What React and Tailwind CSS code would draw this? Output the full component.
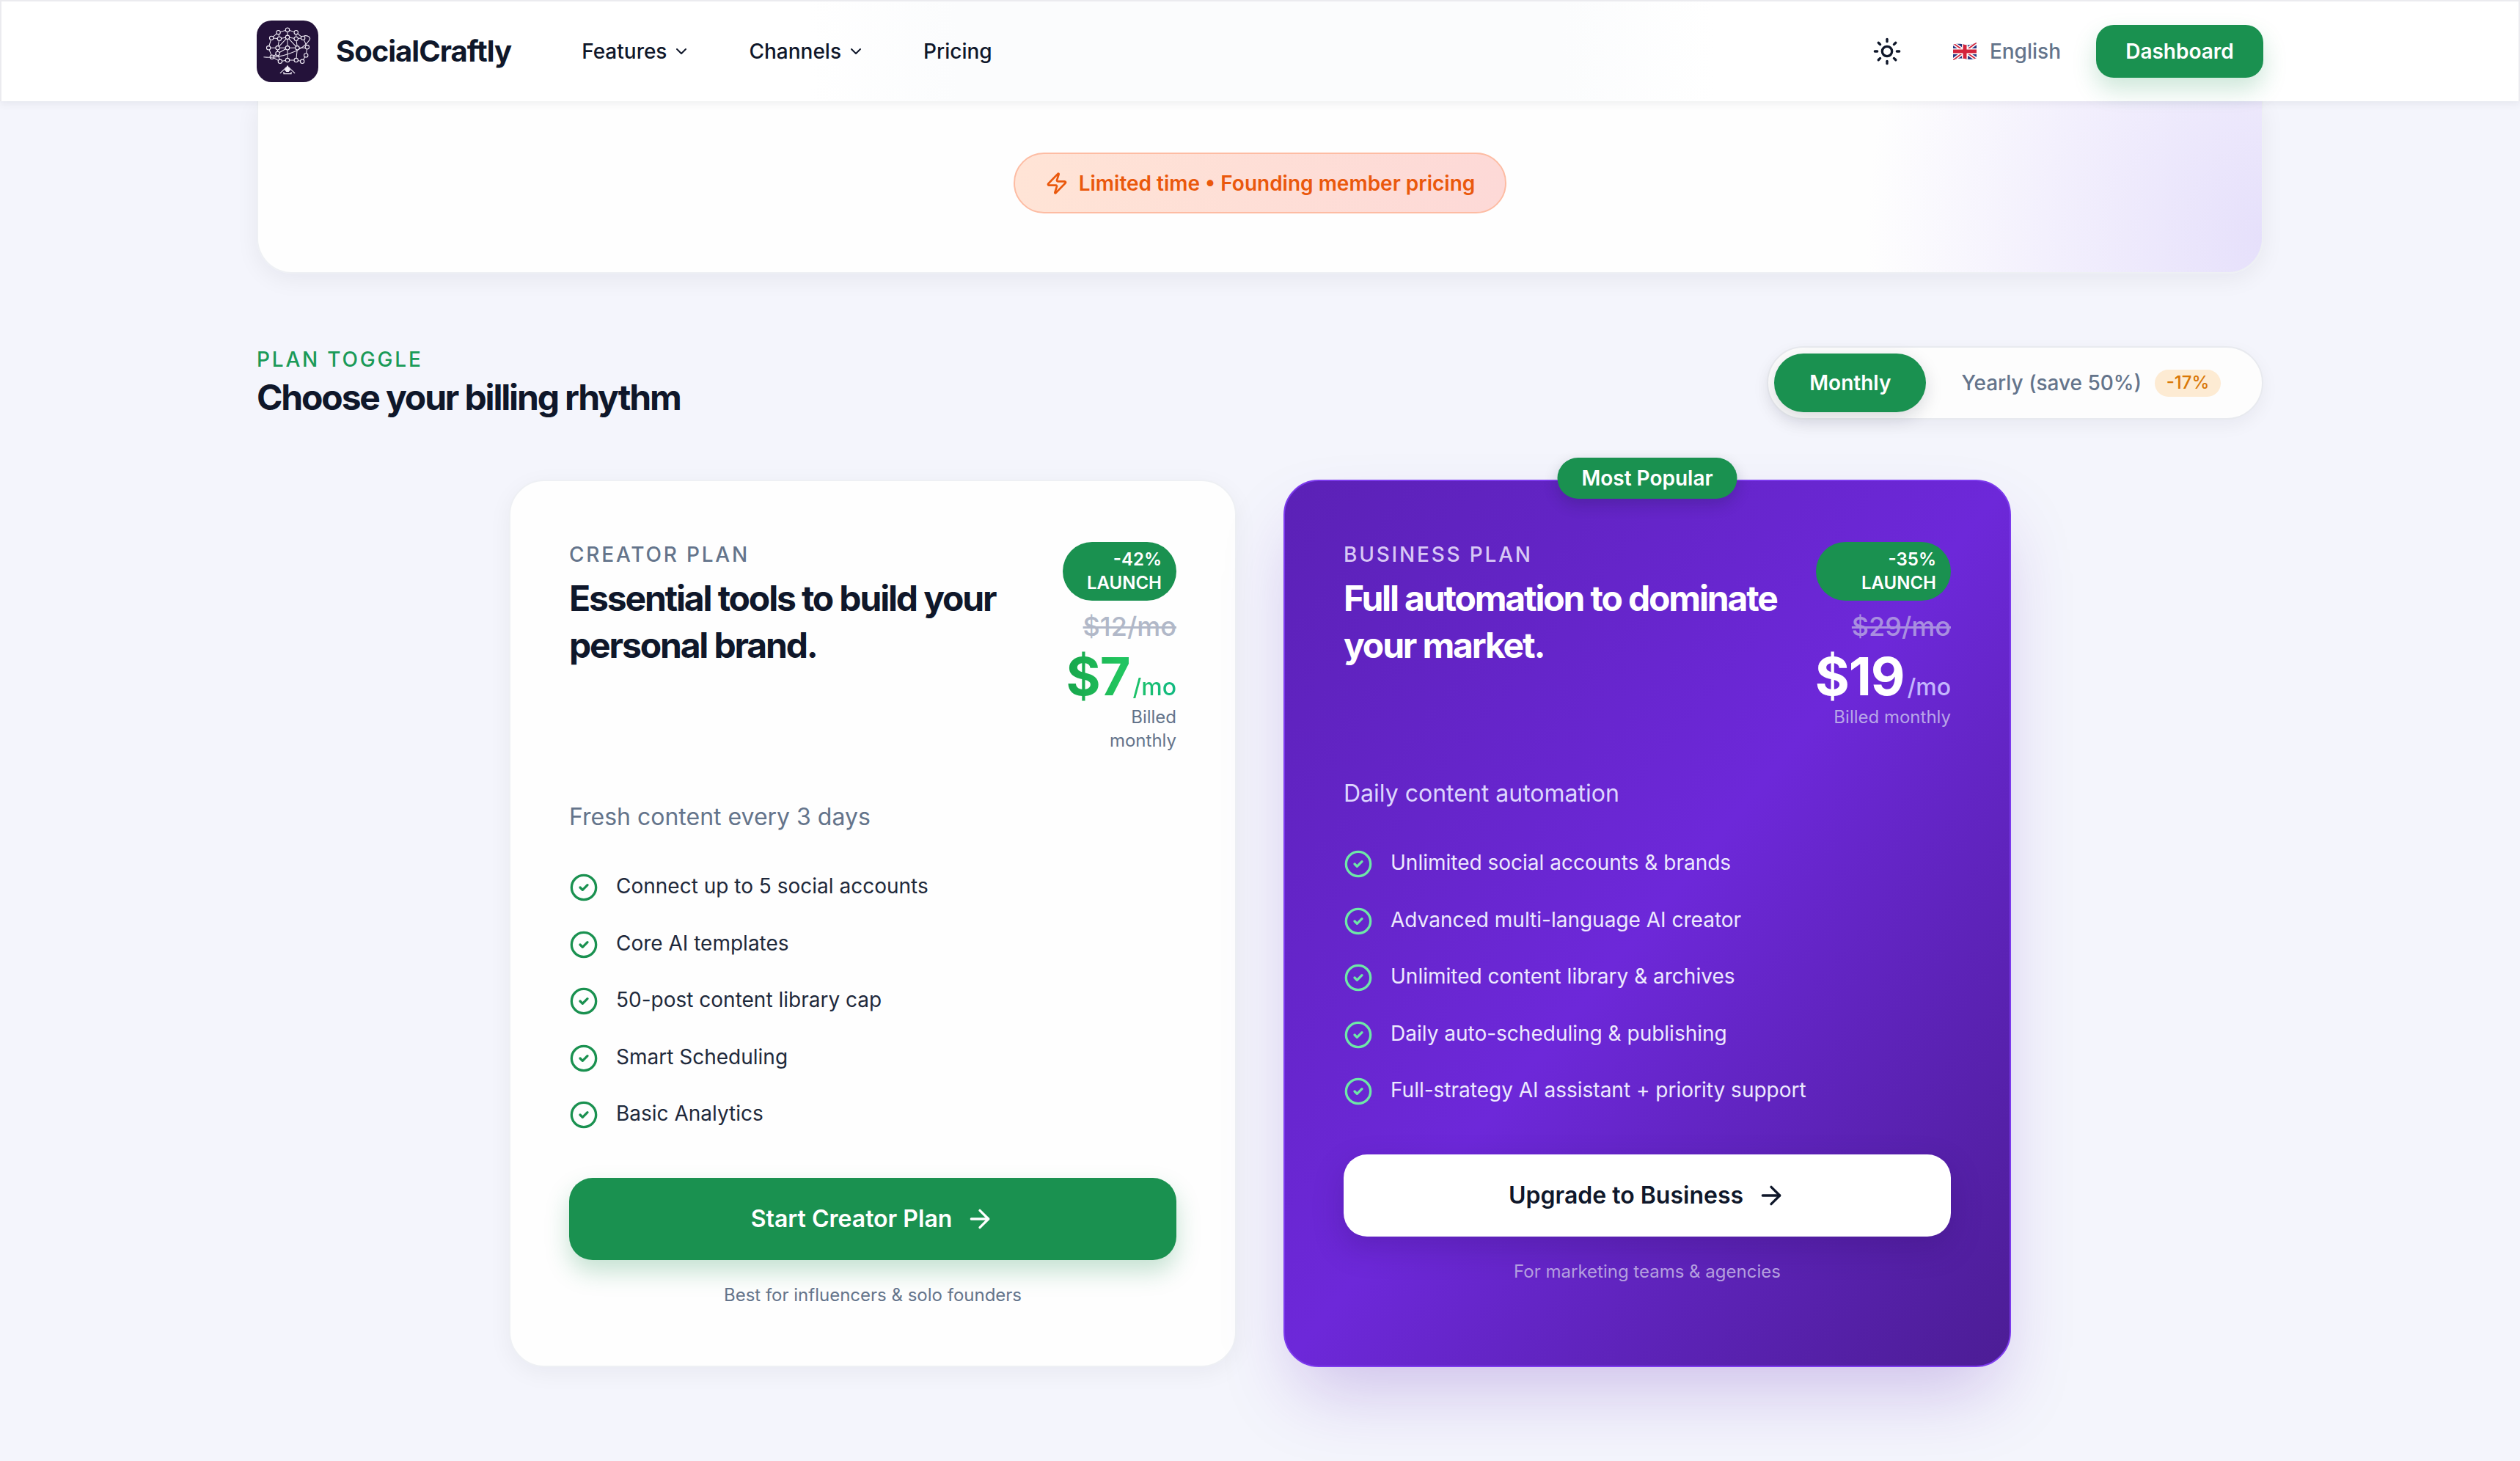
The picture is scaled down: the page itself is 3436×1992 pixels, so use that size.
import React from 'react';
import { ArrowRight, ChevronDown, CircleCheck, Sun, Zap } from 'lucide-react';

const plans = [
  {
    name: 'Creator Plan',
    title: 'Essential tools to build your personal brand.',
    discount: '-42%',
    oldPrice: '$12/mo',
    price: '$7',
    subtitle: 'Fresh content every 3 days',
    features: [
      'Connect up to 5 social accounts',
      'Core AI templates',
      '50-post content library cap',
      'Smart Scheduling',
      'Basic Analytics',
    ],
    cta: 'Start Creator Plan',
    note: 'Best for influencers & solo founders',
  },
  {
    name: 'Business Plan',
    title: 'Full automation to dominate your market.',
    discount: '-35%',
    oldPrice: '$29/mo',
    price: '$19',
    subtitle: 'Daily content automation',
    features: [
      'Unlimited social accounts & brands',
      'Advanced multi-language AI creator',
      'Unlimited content library & archives',
      'Daily auto-scheduling & publishing',
      'Full-strategy AI assistant + priority support',
    ],
    cta: 'Upgrade to Business',
    note: 'For marketing teams & agencies',
    featured: true,
  },
];

const logoNodes = [
  [155, 62], [118, 72], [190, 72], [90, 95], [155, 92], [122, 98], [190, 98], [218, 95],
  [78, 135], [115, 135], [155, 135], [195, 135], [235, 132], [92, 172], [115, 158],
  [230, 165], [125, 190], [155, 185], [190, 185], [215, 190],
];

const logoLines = [
  'M155 62L118 72L90 95L78 135L92 172L125 190L155 185L190 185L215 190L230 165L235 132L218 95L190 72L155 62',
  'M155 62V185M118 72L122 98L115 135L115 158L125 190M190 72L190 98L195 135L190 185',
  'M90 95L122 98L155 92L190 98L218 95M78 135H235M92 172L115 158L155 135M155 92L115 135M155 92L195 135',
];

const Logo = () => (
  <svg viewBox="30 24 250 250" className="w-[84px] h-[84px] shrink-0">
    <rect x="30" y="24" width="250" height="250" rx="60" fill="#24123a" />
    <path d={logoLines.join('')} fill="none" stroke="#f3eef8" strokeWidth="3" />
    {logoNodes.map(([x, y]) => (
      <circle key={`${x}-${y}`} cx={x} cy={y} r="8" fill="#24123a" stroke="#f3eef8" strokeWidth="3.2" />
    ))}
    <path d="M58 172C120 180 215 150 245 102C250 90 235 84 222 86" fill="none" stroke="#e8e2ef" strokeWidth="3.5" />
    <path d="M155 205L167 224L160 232H150L143 224Z" fill="#f3eef8" />
    <path d="M125 238L150 214M185 238L160 214M140 232V240H170V232" fill="none" stroke="#f3eef8" strokeWidth="3.5" />
  </svg>
);

const UkFlag = () => (
  <svg viewBox="0 0 32 24" className="w-8 h-6 shrink-0">
    <defs>
      <clipPath id="flag-wave">
        <path d="M0 3C6 1 11 2 16 3S26 3 32 0V21C26 24 21 23 16 22S6 21 0 24Z" />
      </clipPath>
    </defs>
    <g clipPath="url(#flag-wave)">
      <rect width="32" height="24" fill="#27367f" />
      <path d="M0 1L32 23M32 0L0 24" stroke="#fff" strokeWidth="5" />
      <path d="M0 1L32 23M32 0L0 24" stroke="#d3243c" strokeWidth="1.8" />
      <path d="M16 0V24M0 12H32" stroke="#fff" strokeWidth="8" />
      <path d="M16 0V24M0 12H32" stroke="#d3243c" strokeWidth="5" />
    </g>
  </svg>
);

const Header = () => (
  <header className="relative z-10 h-[138px] bg-[linear-gradient(90deg,#fff_32%,#fbfcfd_38%,#fbfcfd_62%,#fff_68%)] border-2 border-[#ebebef] border-b-0 shadow-[0_2px_12px_rgba(15,23,42,0.08)]">
    <div className="w-[2736px] mx-auto h-full flex items-center justify-between">
      <div className="flex items-center">
        <Logo />
        <span className="ml-6 text-[40px] font-bold tracking-tight text-[#0f172a]">SocialCraftly</span>
        <nav className="ml-24 flex items-center gap-20 text-[28px] font-medium text-[#0f172a]">
          <span className="flex items-center gap-2">
            Features
            <ChevronDown size={24} strokeWidth={2} />
          </span>
          <span className="flex items-center gap-2">
            Channels
            <ChevronDown size={24} strokeWidth={2} />
          </span>
          <span>Pricing</span>
        </nav>
      </div>
      <div className="flex items-center">
        <Sun size={40} strokeWidth={2} className="text-[#0f172a]" />
        <span className="ml-[70px]">
          <UkFlag />
        </span>
        <span className="ml-[18px] text-[28px] font-medium text-[#64748b]">English</span>
        <span className="ml-12 w-[228px] h-[72px] flex items-center justify-center rounded-3xl bg-[#1a9150] text-[28px] font-semibold text-white shadow-[0_16px_32px_rgba(26,145,80,0.22)]">
          Dashboard
        </span>
      </div>
    </div>
  </header>
);

const PlanCard = ({ plan }) => {
  const dark = plan.featured;
  return (
    <div
      className={
        dark
          ? 'relative rounded-[48px] border-2 border-[#7c3aed] bg-linear-to-br from-[#5b21b6] via-[#6d28d9] to-[#4c1d95] p-20 shadow-[0_50px_100px_-20px_rgba(91,33,182,0.25)]'
          : 'relative rounded-[48px] border-2 border-[#eef0f4] bg-[#fefefe] p-20 shadow-[0_8px_32px_rgba(15,23,42,0.05)]'
      }
    >
      {dark && (
        <div className="absolute -top-[32px] left-1/2 -translate-x-1/2 h-14 w-[245px] flex items-center justify-center rounded-full bg-[#1a9150] text-[28px] font-semibold text-white shadow-[0_8px_20px_rgba(15,23,42,0.2)]">
          Most Popular
        </div>
      )}
      <div className="flex justify-between mb-16">
        <div className="w-[620px]">
          <p className={`text-[28px] leading-10 font-medium uppercase tracking-[0.1em] ${dark ? 'text-[#d8c8f5]' : 'text-[#64748b]'}`}>
            {plan.name}
          </p>
          <h3 className={`mt-2 text-[48px] leading-16 font-bold tracking-[-0.045em] ${dark ? 'text-white' : 'text-[#0f172a]'}`}>
            {plan.title}
          </h3>
        </div>
        <div className={`text-right ${dark ? 'w-[184px]' : 'w-[155px]'}`}>
          <div className="mt-[3px] mb-[7px] h-20 rounded-[40px] bg-[#1a9150] px-5 py-2 text-2xl leading-8 font-semibold text-white">
            <span className="block">{plan.discount}</span>
            <span className="block">LAUNCH</span>
          </div>
          <p className={`text-4xl leading-14 font-medium line-through ${dark ? 'text-[#a98ee0]' : 'text-[#b1b8c8]'}`}>
            {plan.oldPrice}
          </p>
          <p className={`flex items-baseline justify-end ${dark ? '' : 'bg-linear-to-r from-[#16a34a] via-[#22c55e] to-[#10b981] bg-clip-text text-transparent'}`}>
            <span className={`text-[72px] leading-20 font-bold tracking-[-0.015em] ${dark ? 'text-white' : ''}`}>{plan.price}</span>
            <span className={`ml-1 text-[32px] font-medium ${dark ? 'text-[#c4b5fd]' : ''}`}>/mo</span>
          </p>
          <p className={`text-2xl leading-8 ${dark ? 'text-[#b8a5e8]' : 'text-[#64748b]'}`}>Billed monthly</p>
        </div>
      </div>
      <p className={`text-[32px] leading-12 ${dark ? 'text-[#ddd6fe]' : 'text-[#64748b]'}`}>{plan.subtitle}</p>
      <ul className="mt-12 flex flex-col gap-8">
        {plan.features.map((feature) => (
          <li key={feature} className={`flex items-start gap-6 text-[28px] leading-[45.5px] ${dark ? 'text-[#ede9fe]' : 'text-[#1e293b]'}`}>
            <CircleCheck size={40} strokeWidth={2} className={`mt-1 shrink-0 ${dark ? 'text-[#6ee7a7]' : 'text-[#1a9150]'}`} />
            {feature}
          </li>
        ))}
      </ul>
      <div
        className={`mt-16 h-28 flex items-center justify-center gap-[18px] rounded-[32px] text-[32px] font-semibold ${
          dark
            ? 'bg-white text-[#0f172a] shadow-[0_16px_40px_rgba(46,16,101,0.25)]'
            : 'bg-[#1a9150] text-white shadow-[0_16px_32px_rgba(26,145,80,0.25)]'
        }`}
      >
        {plan.cta}
        <ArrowRight size={40} strokeWidth={2} />
      </div>
      <p className={`mt-8 text-center text-2xl leading-8 ${dark ? 'text-[#b49fdf]' : 'text-[#64748b]'}`}>{plan.note}</p>
    </div>
  );
};

export default function App() {
  return (
    <div className="min-h-[1992px] overflow-hidden bg-[#f4f5fc] font-[Inter,sans-serif]">
      <Header />
      <main className="w-[2736px] mx-auto">
        <section className="h-[235px] pt-[70px] flex justify-center rounded-b-[48px] border-x-2 border-b-2 border-[#eef0f4] bg-[radial-gradient(ellipse_540px_660px_at_100%_80%,#e6e0fb,#f3f0fd_55%,#fefefe_100%)] shadow-[0_8px_32px_rgba(15,23,42,0.06)]">
          <div className="h-[83px] px-[41px] flex items-center gap-[14px] rounded-full border-2 border-[#fdbca3] bg-linear-to-r from-[#ffe4d6] to-[#fdd9d7] text-[28px] font-semibold text-[#ea580c]">
            <Zap size={32} strokeWidth={2} />
            Limited time • Founding member pricing
          </div>
        </section>

        <section className="mt-[97px] flex items-center justify-between">
          <div>
            <p className="text-[28px] leading-10 font-medium uppercase tracking-[0.1em] text-[#1a9a58]">Plan toggle</p>
            <h2 className="text-[48px] leading-16 font-bold tracking-[-0.045em] text-[#0f172a]">Choose your billing rhythm</h2>
          </div>
          <div className="flex items-center rounded-full border-2 border-[#e8eaef] bg-[#fdfdfd] p-2 shadow-[0_8px_24px_rgba(15,23,42,0.05)]">
            <span className="h-20 px-12 flex items-center rounded-full bg-[#1a9150] text-[28px] font-semibold text-white shadow-[0_8px_24px_rgba(15,23,42,0.15)]">
              Monthly
            </span>
            <span className="pl-12 pr-12 flex items-center gap-[18px] text-[28px] font-medium text-[#64748b]">
              Yearly (save 50%)
              <span className="h-[37px] w-[90px] flex items-center justify-center rounded-full bg-[#fdebd3] text-2xl text-[#d97706]">-17%</span>
            </span>
          </div>
        </section>

        <section className="mt-[80px] w-[2048px] mx-auto grid grid-cols-2 gap-16 pb-32">
          {plans.map((plan) => (
            <PlanCard key={plan.name} plan={plan} />
          ))}
        </section>
      </main>
    </div>
  );
}
